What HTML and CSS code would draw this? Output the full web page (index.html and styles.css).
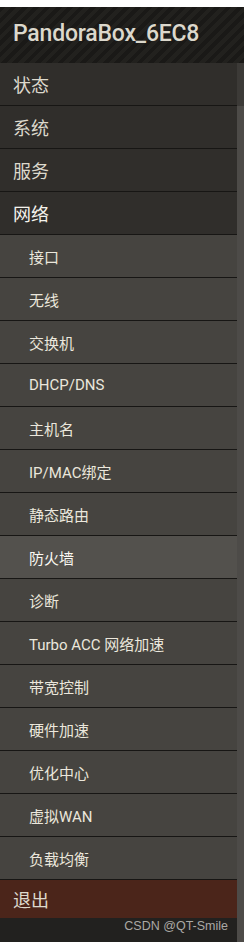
FILE: index.html
```html
<!DOCTYPE html>
<html lang="zh-CN">
<head>
<meta charset="utf-8">
<title>PandoraBox</title>
<link rel="stylesheet" href="styles.css">
</head>
<body>
<div class="topline"></div>
<header class="brand"><span class="brand-name">PandoraBox_6EC8</span></header>
<div class="main">
  <nav class="sidebar">
    <ul class="menu">
      <li class="item top">状态</li>
      <li class="item top">系统</li>
      <li class="item top">服务</li>
      <li class="item top open">网络</li>
      <li class="item sub">接口</li>
      <li class="item sub">无线</li>
      <li class="item sub">交换机</li>
      <li class="item sub">DHCP/DNS</li>
      <li class="item sub">主机名</li>
      <li class="item sub">IP/MAC绑定</li>
      <li class="item sub">静态路由</li>
      <li class="item sub active">防火墙</li>
      <li class="item sub">诊断</li>
      <li class="item sub">Turbo ACC 网络加速</li>
      <li class="item sub">带宽控制</li>
      <li class="item sub">硬件加速</li>
      <li class="item sub">优化中心</li>
      <li class="item sub">虚拟WAN</li>
      <li class="item sub">负载均衡</li>
      <li class="item logout">退出</li>
    </ul>
    <div class="footer"><span class="watermark">CSDN @QT-Smile</span></div>
  </nav>
  <div class="gutter"><div class="gutter-top"></div></div>
</div>
</body>
</html>
```
FILE: styles.css
```css
html, body {
  margin: 0;
  padding: 0;
  background: #22211f;
}
body {
  width: 244px;
  height: 942px;
  overflow: hidden;
  font-family: "Roboto", "Noto Sans CJK SC", sans-serif;
}
.topline {
  height: 7px;
  background: #ffffff;
}
.brand {
  height: 56px;
  box-sizing: border-box;
  padding: 12px 0 0 13px;
  background-color: #1b1a18;
  background-image: repeating-linear-gradient(135deg, #1a1917 0px, #1a1917 4px, #22211e 4px, #22211e 8px);
  color: #dcd8cc;
  font-family: "Roboto", sans-serif;
  font-weight: 500;
  font-size: 23px;
  line-height: 30px;
  letter-spacing: -0.2px;
}
.main {
  display: flex;
  height: 879px;
}
.sidebar {
  width: 237px;
  display: flex;
  flex-direction: column;
  background: #22211f;
}
.menu {
  list-style: none;
  margin: 0;
  padding: 0;
}
.item {
  height: 42px;
  border-bottom: 1px solid #171614;
  display: flex;
  align-items: center;
  font-family: "Roboto", "Noto Sans CJK SC", sans-serif;
}
.top {
  background: #302e2b;
  color: #ddd9cd;
  font-size: 18px;
  padding-left: 13px;
}
.top.open {
  color: #f4f2ec;
}
.sub {
  background: #464440;
  color: #ebe7dc;
  font-size: 15px;
  font-weight: 400;
  padding-left: 29px;
}
.sub.active {
  background: #53514d;
  color: #fbf9f3;
}
.logout {
  height: 38px;
  border-bottom: none;
  background: #4b251a;
  color: #ddd9cd;
  font-size: 18px;
  padding-left: 13px;
}
.footer {
  flex: 1;
  display: flex;
  justify-content: flex-end;
  padding: 0 9px 0 0;
}
.watermark {
  font-family: "Liberation Sans", Arial, sans-serif;
  font-size: 12.5px;
  color: #aaa8a4;
  line-height: 16px;
}
.gutter {
  width: 7px;
  background: #4d4b48;
}
.gutter-top {
  height: 43px;
  background: #3c3a37;
}
```
